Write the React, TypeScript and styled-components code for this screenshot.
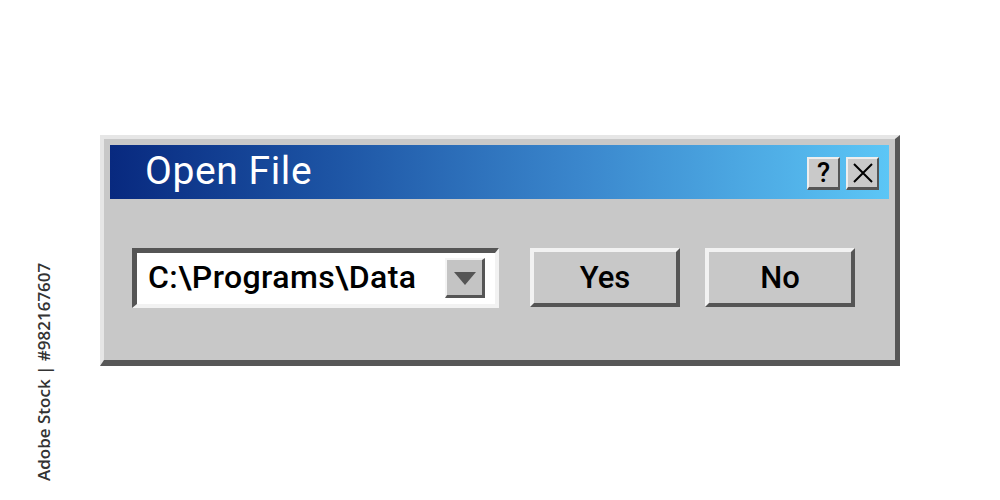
import React from 'react'
import styled, { createGlobalStyle } from 'styled-components'

const GlobalStyle = createGlobalStyle`
  html, body {
    margin: 0;
    padding: 0;
    background: #ffffff;
    font-family: Roboto, "Liberation Sans", sans-serif;
  }
`

const Page = styled.div`
  position: relative;
  width: 1000px;
  height: 500px;
  overflow: hidden;
  background: #ffffff;
  display: flex;
  justify-content: center;
  align-items: flex-start;
  padding-top: 135px;
  box-sizing: border-box;
`

const Credit = styled.div`
  position: absolute;
  left: 32px;
  top: 481px;
  transform: rotate(-90deg);
  transform-origin: 0 0;
  white-space: nowrap;
  font-family: "Open Sans", sans-serif;
  font-size: 17px;
  font-weight: 600;
  color: #333333;
`

const Dialog = styled.div`
  width: 800px;
  height: 231px;
  box-sizing: border-box;
  background: #c8c8c8;
  border-style: solid;
  border-width: 4px 5px 6px 4px;
  border-color: #e6e6e6 #575757 #575757 #e6e6e6;
  padding: 6px;
  display: flex;
  flex-direction: column;
`

const TitleBar = styled.div`
  height: 54px;
  background: linear-gradient(90deg, #08297f 0%, #1a4fa0 25%, #3a86cc 60%, #5cc6f6 100%);
  display: flex;
  align-items: center;
  padding: 0 10px 0 35px;
`

const Title = styled.div`
  flex: 1;
  color: #ffffff;
  font-size: 39px;
  letter-spacing: 0.6px;
  font-weight: 400;
  line-height: 1;
  margin-top: -2px;
`

const TitleButtons = styled.div`
  display: flex;
  gap: 6px;
  margin-top: 3px;
`

const SmallButton = styled.div`
  width: 33px;
  height: 33px;
  box-sizing: border-box;
  background: #c9c9c9;
  border-style: solid;
  border-width: 2px 2px 3px 2px;
  border-color: #eeeeee #555555 #555555 #eeeeee;
  display: flex;
  align-items: center;
  justify-content: center;
  color: #000;
  font-size: 27px;
  font-weight: 500;
  line-height: 1;
`

const Content = styled.div`
  flex: 1;
  display: flex;
  align-items: flex-start;
  padding: 49px 0 0 22px;
`

const Combo = styled.div`
  width: 367px;
  height: 60px;
  box-sizing: border-box;
  background: #ffffff;
  border-style: solid;
  border-width: 5px 4px 4px 5px;
  border-color: #555555 #f2f2f2 #f2f2f2 #555555;
  display: flex;
  align-items: center;
  padding: 0 10px 1px 11px;
`

const ComboText = styled.div`
  flex: 1;
  font-size: 32px;
  letter-spacing: 0.4px;
  font-weight: 500;
  color: #000;
  line-height: 1;
  margin-top: -2px;
  white-space: nowrap;
`

const Arrow = styled.div`
  width: 40px;
  height: 40px;
  flex-shrink: 0;
  box-sizing: border-box;
  background: #c4c4c4;
  border-style: solid;
  border-width: 2px 3px 3px 2px;
  border-color: #f4f4f4 #555555 #555555 #f4f4f4;
  display: flex;
  align-items: center;
  justify-content: center;
  &::after {
    content: '';
    width: 0;
    height: 0;
    border-left: 11px solid transparent;
    border-right: 11px solid transparent;
    border-top: 13px solid #555555;
    margin-top: 2px;
  }
`

const Button = styled.div<{ $gap?: number }>`
  width: 150px;
  height: 59px;
  box-sizing: border-box;
  margin-left: ${p => p.$gap ?? 0}px;
  background: #c8c8c8;
  border-style: solid;
  border-width: 4px;
  border-color: #f2f2f2 #555555 #555555 #f2f2f2;
  display: flex;
  align-items: center;
  justify-content: center;
  font-size: 31px;
  font-weight: 500;
  color: #000;
`

export default function App() {
  return (
    <Page>
      <GlobalStyle />
      <Credit>Adobe Stock | #982167607</Credit>
      <Dialog>
        <TitleBar>
          <Title>Open File</Title>
          <TitleButtons>
            <SmallButton>?</SmallButton>
            <SmallButton>
              <svg width="22" height="22" viewBox="0 0 22 22">
                <path d="M2 2 L20 20 M20 2 L2 20" stroke="#000" strokeWidth="2" fill="none" />
              </svg>
            </SmallButton>
          </TitleButtons>
        </TitleBar>
        <Content>
          <Combo>
            <ComboText>C:\Programs\Data</ComboText>
            <Arrow />
          </Combo>
          <Button $gap={31}>Yes</Button>
          <Button $gap={25}>No</Button>
        </Content>
      </Dialog>
    </Page>
  )
}
